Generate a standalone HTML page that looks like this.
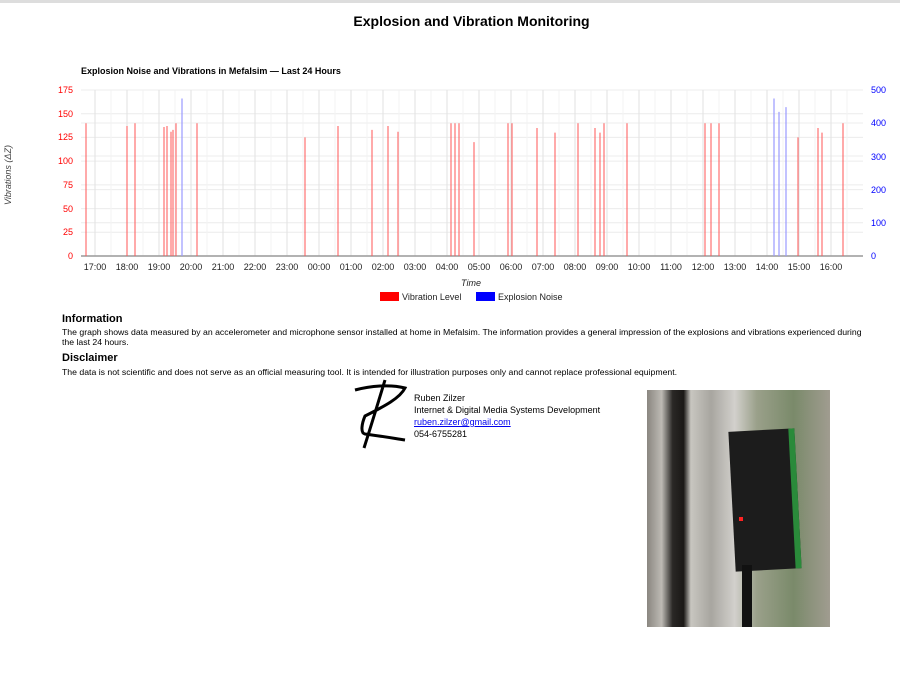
<!DOCTYPE html><html><head><meta charset="utf-8"><style>
body{margin:0;width:900px;height:675px;background:#fff;font-family:"Liberation Sans",Arial,sans-serif;position:relative;overflow:hidden}
.top{position:absolute;top:0;left:0;width:900px;height:3px;background:#ddd}
h1{position:absolute;top:13px;left:0;width:943px;text-align:center;font-size:14px;margin:0;font-weight:bold;color:#000}
.t{position:absolute;left:62px;font-size:8.7px;color:#000;line-height:10px;width:812px}
h3{position:absolute;left:62px;margin:0;font-size:11px;font-weight:bold}
.sig{position:absolute;left:414px;top:392px;font-size:9px;line-height:12px;color:#000}
.sig a{color:#00e;text-decoration:underline}
.photo{position:absolute;left:647px;top:390px;width:183px;height:237px;background:linear-gradient(90deg,#8a8680 0,#bdbab4 8%,#2a2826 14%,#1a1816 20%,#c8c6c0 24%,#a8a6a0 35%,#d2d0cc 48%,#9aa08a 60%,#7a8a6a 80%,#a09c90 100%)}
</style></head><body>
<div class="top"></div>
<h1>Explosion and Vibration Monitoring</h1>
<svg style="position:absolute;left:0;top:0" width="900" height="310" font-family="Liberation Sans,Arial,sans-serif">
<text x="81" y="74" font-size="9" font-weight="bold">Explosion Noise and Vibrations in Mefalsim — Last 24 Hours</text>
<g stroke="#ececec" stroke-width="1">
<line x1="81" x2="863" y1="90" y2="90"/><line x1="81" x2="863" y1="113.7" y2="113.7"/><line x1="81" x2="863" y1="137.4" y2="137.4"/><line x1="81" x2="863" y1="161.1" y2="161.1"/><line x1="81" x2="863" y1="184.9" y2="184.9"/><line x1="81" x2="863" y1="208.6" y2="208.6"/><line x1="81" x2="863" y1="232.3" y2="232.3"/>
<line x1="81" x2="863" y1="123" y2="123"/><line x1="81" x2="863" y1="156" y2="156"/><line x1="81" x2="863" y1="189.6" y2="189.6"/><line x1="81" x2="863" y1="222.8" y2="222.8"/>
</g>
<g id="vg"></g>
<line x1="81" x2="863" y1="256" y2="256" stroke="#999" stroke-width="1.5"/>
<g font-size="9" fill="#f00" text-anchor="end">
<text x="73" y="93">175</text><text x="73" y="117">150</text><text x="73" y="140">125</text><text x="73" y="164">100</text><text x="73" y="188">75</text><text x="73" y="212">50</text><text x="73" y="235">25</text><text x="73" y="259">0</text></g>
<g font-size="9" fill="#00f">
<text x="871" y="93">500</text><text x="871" y="126">400</text><text x="871" y="160">300</text><text x="871" y="193">200</text><text x="871" y="226">100</text><text x="871" y="259">0</text></g>
<g id="xl" font-size="9" fill="#222" text-anchor="middle"></g>
<g id="bars"></g>
<text x="471" y="286" font-size="9" font-style="italic" text-anchor="middle" fill="#222">Time</text>
<text transform="translate(11,175) rotate(-90)" font-size="9" font-style="italic" fill="#444" text-anchor="middle">Vibrations (ΔZ)</text>
<rect x="380" y="292" width="19" height="9" fill="#f00"/><text x="402" y="300" font-size="9" fill="#222">Vibration Level</text>
<rect x="476" y="292" width="19" height="9" fill="#00f"/><text x="498" y="300" font-size="9" fill="#222">Explosion Noise</text>
</svg>
<h3 style="top:313px">Information</h3>
<div class="t" style="top:327px">The graph shows data measured by an accelerometer and microphone sensor installed at home in Mefalsim. The information provides a general impression of the explosions and vibrations experienced during the last 24 hours.</div>
<h3 style="top:352px">Disclaimer</h3>
<div class="t" style="top:367px">The data is not scientific and does not serve as an official measuring tool. It is intended for illustration purposes only and cannot replace professional equipment.</div>
<svg style="position:absolute;left:350px;top:378px" width="60" height="72"><path d="M5 12 C20 8 40 6 55 10 C50 20 35 28 15 38 C12 45 10 55 15 56 C30 58 42 60 55 62 M35 2 C28 25 22 45 14 70" stroke="#000" stroke-width="3" fill="none"/></svg>
<div class="sig">Ruben Zilzer<br>Internet &amp; Digital Media Systems Development<br><a>ruben.zilzer@gmail.com</a><br>054-6755281</div>
<div class="photo"><div style="position:absolute;left:85px;top:40px;width:60px;height:140px;background:#1c1c1c;border-right:6px solid #2a8a3a;transform:rotate(-3deg)"></div><div style="position:absolute;left:92px;top:127px;width:4px;height:4px;background:#f22"></div><div style="position:absolute;left:95px;top:175px;width:10px;height:62px;background:#111"></div></div>
<script>
var vg=document.getElementById('vg'),xl=document.getElementById('xl'),b=document.getElementById('bars'),ns='http://www.w3.org/2000/svg';
function L(p,a){var e=document.createElementNS(ns,'line');for(var k in a)e.setAttribute(k,a[k]);p.appendChild(e);}
var h=['17:00','18:00','19:00','20:00','21:00','22:00','23:00','00:00','01:00','02:00','03:00','04:00','05:00','06:00','07:00','08:00','09:00','10:00','11:00','12:00','13:00','14:00','15:00','16:00'];
for(var i=0;i<24;i++){var x=95+i*32.0;L(vg,{x1:x,x2:x,y1:90,y2:256,stroke:'#e2e2e2'});L(vg,{x1:x+16,x2:x+16,y1:90,y2:256,stroke:'#f3f3f3'});var t=document.createElementNS(ns,'text');t.setAttribute('x',x);t.setAttribute('y',270);t.textContent=h[i];xl.appendChild(t);}
var r=[[86,140],[127,137],[135,140],[164,136],[167,137],[171,131],[173,133],[176,140],[197,140],[305,125],[338,137],[372,133],[388,137],[398,131],[451,140],[455,140],[459,140],[474,120],[508,140],[512,140],[537,135],[555,130],[578,140],[595,135],[600,130],[604,140],[627,140],[705,140],[711,140],[719,140],[779,120],[786,140],[798,125],[818,135],[822,130],[843,140]];
r.forEach(function(v){L(b,{x1:v[0],x2:v[0],y1:256-v[1]*166/175,y2:256,stroke:'#f55','stroke-width':1});});
[[182,166],[774,166],[779,152],[786,157]].forEach(function(v){L(b,{x1:v[0],x2:v[0],y1:256-v[1]*166/175,y2:256,stroke:'#99f','stroke-width':1.2});});
</script>
</body></html>
